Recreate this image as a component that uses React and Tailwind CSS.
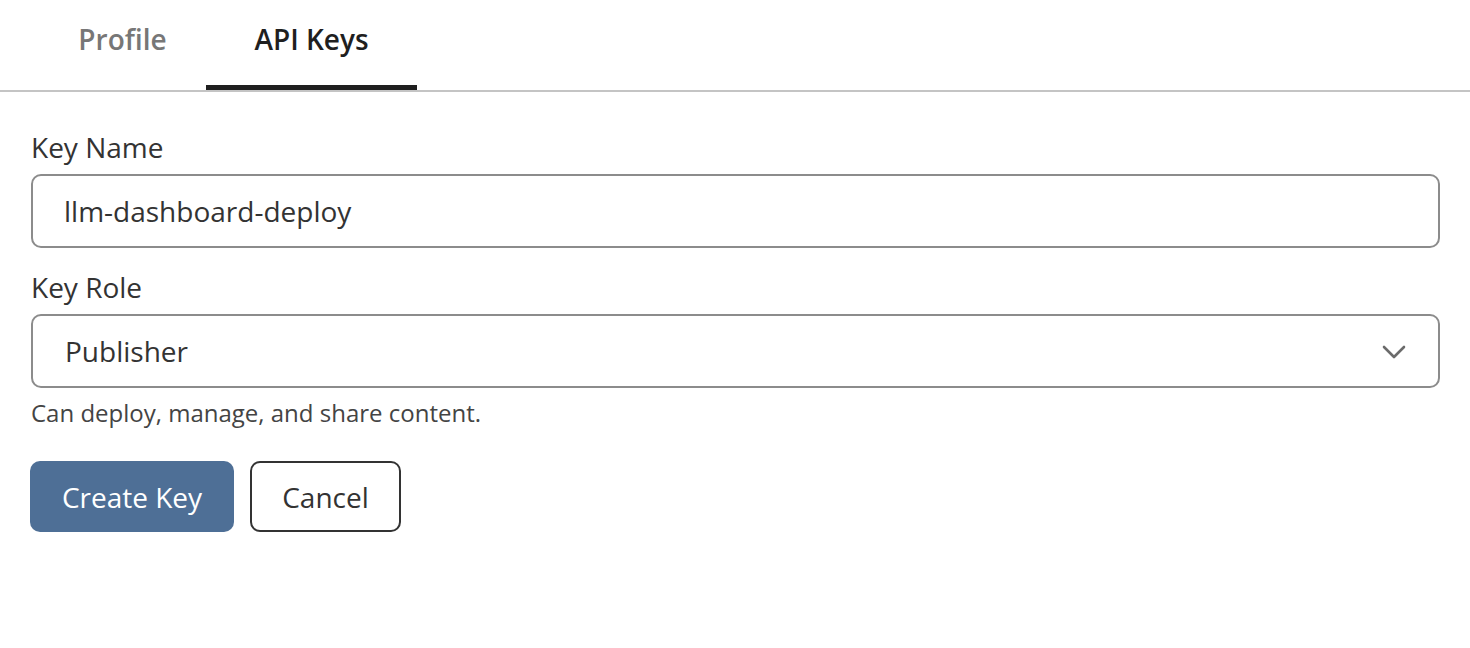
import { useState } from "react";

function ChevronDown() {
  return (
    <svg width="26" height="16" viewBox="0 0 26 16" fill="none" stroke="#6b6b6b" strokeWidth="2.6" strokeLinecap="round" strokeLinejoin="round">
      <path d="M3 3l10 10 10-10" />
    </svg>
  );
}

export default function App() {
  const [tab, setTab] = useState("keys");
  const [name, setName] = useState("llm-dashboard-deploy");
  const [role, setRole] = useState("Publisher");

  return (
    <div className="min-h-[648px] w-full bg-white text-[#333] font-['Open_Sans',sans-serif]">
      <div className="flex h-[92px] border-b-2 border-[#c4c4c4] pl-[39px]">
        <button
          onClick={() => setTab("profile")}
          className={`w-[167px] h-[90px] pb-[8px] text-[28px] font-semibold border-b-[5px] ${tab === "profile" ? "text-[#1f1f1f] border-[#1f1f1f]" : "text-[#777] border-transparent"}`}
        >
          Profile
        </button>
        <button
          onClick={() => setTab("keys")}
          className={`w-[211px] h-[90px] pb-[8px] text-[28px] font-semibold border-b-[5px] ${tab === "keys" ? "text-[#1f1f1f] border-[#1f1f1f]" : "text-[#777] border-transparent"}`}
        >
          API Keys
        </button>
      </div>

      <form className="px-[31px] pt-[37px] w-[1470px]" onSubmit={(e) => e.preventDefault()}>
        <label className="block text-[28px] leading-[36px] mb-[9px]">Key Name</label>
        <input
          value={name}
          onChange={(e) => setName(e.target.value)}
          className="w-[1409px] h-[74px] rounded-[10px] border-2 border-[#8c8c8c] px-[31px] text-[28px] text-[#333] outline-none"
        />

        <label className="block text-[28px] leading-[36px] mt-[21px] mb-[9px]">Key Role</label>
        <div className="relative w-[1409px]">
          <select
            value={role}
            onChange={(e) => setRole(e.target.value)}
            className="w-full h-[74px] appearance-none rounded-[10px] border-2 border-[#8c8c8c] bg-white px-[32px] text-[28px] text-[#333] outline-none"
          >
            <option>Viewer</option>
            <option>Publisher</option>
            <option>Administrator</option>
          </select>
          <span className="pointer-events-none absolute right-[33px] top-[30px]">
            <ChevronDown />
          </span>
        </div>
        <p className="mt-[9px] text-[24px] leading-[32px] text-[#444]">Can deploy, manage, and share content.</p>

        <div className="mt-[32px] flex gap-[16px] -ml-[1px]">
          <button type="submit" className="h-[71px] w-[204px] rounded-[10px] bg-[#4e6f96] text-[28px] text-white">
            Create Key
          </button>
          <button type="button" className="h-[71px] w-[151px] rounded-[10px] border-2 border-[#333] bg-white text-[28px] text-[#333]">
            Cancel
          </button>
        </div>
      </form>
    </div>
  );
}
